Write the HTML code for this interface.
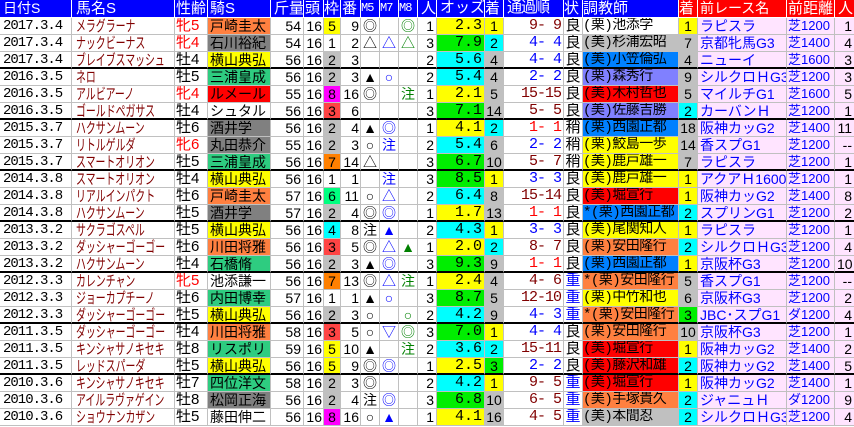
<!DOCTYPE html>
<html><head><meta charset="utf-8">
<style>
*{margin:0;padding:0;box-sizing:border-box}
body{width:854px;height:427px;background:#fff;overflow:hidden;font-family:"Liberation Sans","Noto Sans CJK JP",sans-serif;font-size:14px;color:#000}
.r{display:flex;height:17px;line-height:16px;white-space:nowrap}
.r span{display:block;height:17px;border-right:1px solid #c0c0c0;border-bottom:1px solid #c0c0c0;overflow:hidden;padding:0 2px}
.h{height:18px}
.h span{height:18px;background:#0000ff;color:#fff;border-right:1px solid #fff;border-bottom:1px solid #fff;line-height:17px;text-align:left!important;padding-left:3px;font-size:15px}
.h span.hr{background:#ff0000}
.h span.sm{font-size:12px;padding-left:1px;font-family:"Liberation Mono",monospace;letter-spacing:-1px}
.s span{border-bottom:2px solid #000}
.r span:nth-child(1){width:72px;font-family:"Liberation Mono",monospace;font-size:14px;letter-spacing:-1px;padding-left:3px}
.h span:nth-child(1){font-family:"Liberation Sans","Noto Sans CJK JP",sans-serif;letter-spacing:0}
.r span:nth-child(2){width:103px;color:#800000;padding-left:4px}
.r span:nth-child(2) i{display:inline-block;font-style:normal;font-size:15px;transform:scaleX(.66);transform-origin:0 50%}
.r span:nth-child(3){width:33px;font-size:15px;padding-left:1px}
.r span:nth-child(4){width:63px;padding-left:2px;font-size:14px}
.h span:nth-child(4){font-size:15px}
.r span:nth-child(5){width:33px;text-align:right}
.r span:nth-child(6){width:20px;text-align:right;padding:0 1px}
.r span:nth-child(7){width:17px;text-align:center;padding:0}
.r span:nth-child(8){width:20px;text-align:right;padding:0 1px}
.r span:nth-child(9){width:19px;text-align:center;padding:0}
.r span:nth-child(10){width:19px;text-align:center;padding:0;color:#0000ff}
.r span:nth-child(11){width:19px;text-align:center;padding:0;color:#008000}
.r span:nth-child(12){width:19px;text-align:right}
.r span:nth-child(13){width:48px;text-align:right;font-family:"Liberation Mono",monospace;font-size:15px}
.r span:nth-child(14){width:19px;text-align:center;padding:0}
.r span:nth-child(15){width:60px;text-align:right;font-family:"Liberation Mono",monospace;font-size:15px;letter-spacing:-1px}
.r span:nth-child(16){width:19px;text-align:center;padding:0;font-size:15px}
.r span:nth-child(17){width:96px;padding-left:0;font-family:"Liberation Mono","Noto Sans CJK JP",monospace;font-size:14px;letter-spacing:-0.5px}
.r span:nth-child(18){width:19px;text-align:center;padding:0}
.r span:nth-child(19){width:89px;color:#0000ff;background:#ffe4ff;padding-left:2px;font-size:14px}
.r span:nth-child(20){width:48px;color:#0000ff;background:#ffe4ff;padding-left:1px;font-size:13px;letter-spacing:0}
.r span:nth-child(21){width:19px;text-align:right;background:#ffe4ff;border-right:none}
.h span:nth-child(17),.h span:nth-child(20){font-family:"Liberation Sans","Noto Sans CJK JP",sans-serif;letter-spacing:0;font-size:15px}
.h span:nth-child(19),.h span:nth-child(20),.h span:nth-child(21){background:#ff0000;color:#fff}
.h span:nth-child(2),.h span:nth-child(10),.h span:nth-child(11){color:#fff}
.fm{color:#ff0000}
.y{background:#ffff00!important}.c{background:#00ffff!important}.g{background:#00ee00!important}
.sv{background:#c0c0c0!important}.o{background:#ff8040!important}.rd{background:#ff0000!important}
.b{background:#0080ff!important}.p{background:#8080ff!important}.gy{background:#808080!important}
.m{background:#ff00ff!important}.t{background:#2ecc80!important}.f6{background:#00ff80!important}
.f3{background:#ff4444!important}.f7{background:#ff8000!important}
.dr{color:#800000}.bl{color:#0000ff}.rr{color:#ff0000}
</style></head><body>
<div class="r h"><span>日付S</span><span>馬名S</span><span>性齢</span><span>騎S</span><span>斤量</span><span>頭</span><span>枠</span><span>番</span><span class="sm">M5</span><span class="sm">M7</span><span class="sm">M8</span><span>人</span><span>オッズ</span><span>着</span><span>通過順</span><span>状</span><span>調教師</span><span class="hr">着</span><span>前レース名</span><span>前距離</span><span>人</span></div>

<div class="r"><span>2017.3.4</span><span><i>メラグラーナ</i></span><span class="fm">牝5</span><span class="o">戸崎圭太</span><span>54</span><span>16</span><span class="y">5</span><span>9</span><span>◎</span><span></span><span>◎</span><span>1</span><span class="y">2.3</span><span class="y">1</span><span class="dr">9- 9</span><span>良</span><span> (栗)池添学</span><span class="y">1</span><span>ラピスラ</span><span>芝1200</span><span>1</span></div>
<div class="r"><span>2017.3.4</span><span><i>ナックビーナス</i></span><span class="fm">牝4</span><span class="gy">石川裕紀</span><span>54</span><span>16</span><span>1</span><span>2</span><span>△</span><span>△</span><span>△</span><span>3</span><span class="g">7.9</span><span class="c">2</span><span class="bl">4- 4</span><span>良</span><span class="sv"> (美)杉浦宏昭</span><span class="sv">7</span><span>京都牝馬G3</span><span>芝1400</span><span>4</span></div>
<div class="r s"><span>2017.3.4</span><span><i>ブレイブスマッシュ</i></span><span>牡4</span><span class="y">横山典弘</span><span>56</span><span>16</span><span class="sv">2</span><span>3</span><span></span><span></span><span></span><span>2</span><span class="c">5.6</span><span class="sv">4</span><span class="bl">4- 4</span><span>良</span><span class="b"> (美)小笠倫弘</span><span class="sv">4</span><span>ニューイ</span><span>芝1600</span><span>3</span></div>

<div class="r"><span>2016.3.5</span><span><i>ネロ</i></span><span>牡5</span><span class="t">三浦皇成</span><span>56</span><span>16</span><span class="sv">2</span><span>3</span><span>▲</span><span>○</span><span></span><span>2</span><span class="c">5.4</span><span class="sv">4</span><span class="bl">2- 2</span><span>良</span><span class="p"> (栗)森秀行</span><span class="sv">9</span><span>シルクロＨG3</span><span>芝1200</span><span>3</span></div>
<div class="r"><span>2016.3.5</span><span><i>アルビアーノ</i></span><span class="fm">牝4</span><span class="rd">ルメール</span><span>55</span><span>16</span><span class="m">8</span><span>16</span><span>◎</span><span></span><span>注</span><span>1</span><span class="y">2.1</span><span class="sv">5</span><span class="dr">15-15</span><span>良</span><span class="rd"> (美)木村哲也</span><span class="sv">5</span><span>マイルチG1</span><span>芝1600</span><span>5</span></div>
<div class="r s"><span>2016.3.5</span><span><i>ゴールドペガサス</i></span><span>牡4</span><span>シュタル</span><span>56</span><span>16</span><span class="f3">3</span><span>6</span><span></span><span></span><span></span><span>3</span><span class="g">7.1</span><span class="sv">14</span><span class="dr">5- 5</span><span>良</span><span class="p"> (美)佐藤吉勝</span><span class="c">2</span><span>カーバンＨ</span><span>芝1200</span><span>1</span></div>

<div class="r"><span>2015.3.7</span><span><i>ハクサンムーン</i></span><span>牡6</span><span class="gy">酒井学</span><span>56</span><span>16</span><span class="sv">2</span><span>4</span><span>▲</span><span>◎</span><span></span><span>1</span><span class="y">4.1</span><span class="c">2</span><span class="rr">1- 1</span><span>稍</span><span class="b"> (栗)西園正都</span><span class="sv">18</span><span>阪神カッG2</span><span>芝1400</span><span>11</span></div>
<div class="r"><span>2015.3.7</span><span><i>リトルゲルダ</i></span><span class="fm">牝6</span><span class="gy">丸田恭介</span><span>55</span><span>16</span><span class="sv">2</span><span>3</span><span>○</span><span>注</span><span></span><span>2</span><span class="c">5.4</span><span class="sv">6</span><span class="bl">2- 2</span><span>稍</span><span class="y"> (栗)鮫島一歩</span><span class="sv">14</span><span>香スプG1</span><span>芝1200</span><span>--</span></div>
<div class="r s"><span>2015.3.7</span><span><i>スマートオリオン</i></span><span>牡5</span><span class="t">三浦皇成</span><span>56</span><span>16</span><span class="f7">7</span><span>14</span><span>△</span><span></span><span></span><span>3</span><span class="g">6.7</span><span class="sv">10</span><span class="dr">5- 7</span><span>稍</span><span class="y"> (美)鹿戸雄一</span><span class="sv">7</span><span>ラピスラ</span><span>芝1200</span><span>1</span></div>

<div class="r"><span>2014.3.8</span><span><i>スマートオリオン</i></span><span>牡4</span><span class="y">横山典弘</span><span>56</span><span>16</span><span>1</span><span>1</span><span></span><span>注</span><span></span><span>3</span><span class="g">8.5</span><span class="y">1</span><span class="bl">3- 3</span><span>良</span><span class="y"> (美)鹿戸雄一</span><span class="y">1</span><span>アクアＨ1600</span><span>芝1200</span><span>1</span></div>
<div class="r"><span>2014.3.8</span><span><i>リアルインパクト</i></span><span>牡6</span><span class="o">戸崎圭太</span><span>57</span><span>16</span><span class="f6">6</span><span>11</span><span>○</span><span>△</span><span></span><span>2</span><span class="c">6.4</span><span class="sv">8</span><span class="dr">15-14</span><span>良</span><span class="rd"> (美)堀宣行</span><span class="y">1</span><span>阪神カッG2</span><span>芝1400</span><span>8</span></div>
<div class="r s"><span>2014.3.8</span><span><i>ハクサンムーン</i></span><span>牡5</span><span class="gy">酒井学</span><span>57</span><span>16</span><span class="sv">2</span><span>4</span><span>◎</span><span>◎</span><span></span><span>1</span><span class="y">1.7</span><span class="sv">13</span><span class="rr">1- 1</span><span>良</span><span class="b">*(栗)西園正都</span><span class="c">2</span><span>スプリンG1</span><span>芝1200</span><span>2</span></div>

<div class="r"><span>2013.3.2</span><span><i>サクラゴスペル</i></span><span>牡5</span><span class="y">横山典弘</span><span>56</span><span>16</span><span class="c">4</span><span>8</span><span>注</span><span>▲</span><span></span><span>2</span><span class="c">4.3</span><span class="y">1</span><span class="bl">3- 3</span><span>良</span><span class="y"> (美)尾関知人</span><span class="y">1</span><span>ラピスラ</span><span>芝1200</span><span>1</span></div>
<div class="r"><span>2013.3.2</span><span><i>ダッシャーゴーゴー</i></span><span>牡6</span><span class="o">川田将雅</span><span>56</span><span>16</span><span class="f3">3</span><span>5</span><span>◎</span><span>△</span><span>▲</span><span>1</span><span class="y">2.0</span><span class="c">2</span><span class="dr">8- 7</span><span>良</span><span class="o"> (栗)安田隆行</span><span class="c">2</span><span>シルクロＨG3</span><span>芝1200</span><span>4</span></div>
<div class="r s"><span>2013.3.2</span><span><i>ハクサンムーン</i></span><span>牡4</span><span class="t">石橋脩</span><span>56</span><span>16</span><span class="sv">2</span><span>3</span><span>▲</span><span>◎</span><span></span><span>3</span><span class="g">9.3</span><span class="sv">9</span><span class="rr">1- 1</span><span>良</span><span class="b"> (栗)西園正都</span><span class="y">1</span><span>京阪杯G3</span><span>芝1200</span><span>10</span></div>

<div class="r"><span>2012.3.3</span><span><i>カレンチャン</i></span><span class="fm">牝5</span><span>池添謙一</span><span>56</span><span>16</span><span class="f7">7</span><span>13</span><span>◎</span><span>△</span><span>注</span><span>1</span><span class="y">2.4</span><span class="sv">4</span><span class="dr">4- 6</span><span class="bl">重</span><span class="o">*(栗)安田隆行</span><span class="sv">5</span><span>香スプG1</span><span>芝1200</span><span>--</span></div>
<div class="r"><span>2012.3.3</span><span><i>ジョーカプチーノ</i></span><span>牡6</span><span class="t">内田博幸</span><span>57</span><span>16</span><span>1</span><span>1</span><span>▲</span><span>○</span><span></span><span>3</span><span class="g">8.7</span><span class="sv">5</span><span class="dr">12-10</span><span class="bl">重</span><span class="y"> (栗)中竹和也</span><span class="sv">6</span><span>京阪杯G3</span><span>芝1200</span><span>2</span></div>
<div class="r s"><span>2012.3.3</span><span><i>ダッシャーゴーゴー</i></span><span>牡5</span><span class="y">横山典弘</span><span>56</span><span>16</span><span class="sv">2</span><span>3</span><span>○</span><span></span><span>○</span><span>2</span><span class="c">4.2</span><span class="sv">9</span><span class="bl">4- 3</span><span class="bl">重</span><span class="o">*(栗)安田隆行</span><span class="g">3</span><span>JBC･スプG1</span><span>ダ1200</span><span>4</span></div>

<div class="r"><span>2011.3.5</span><span><i>ダッシャーゴーゴー</i></span><span>牡4</span><span class="o">川田将雅</span><span>58</span><span>16</span><span class="f3">3</span><span>5</span><span>○</span><span>▽</span><span>◎</span><span>3</span><span class="g">7.0</span><span class="y">1</span><span class="bl">4- 4</span><span>良</span><span class="o"> (栗)安田隆行</span><span class="sv">10</span><span>京阪杯G3</span><span>芝1200</span><span>1</span></div>
<div class="r"><span>2011.3.5</span><span><i>キンシャサノキセキ</i></span><span>牡8</span><span class="t">リスポリ</span><span>59</span><span>16</span><span class="y">5</span><span>10</span><span>▲</span><span></span><span>注</span><span>2</span><span class="c">3.6</span><span class="c">2</span><span class="dr">15-11</span><span>良</span><span class="rd"> (美)堀宣行</span><span class="y">1</span><span>阪神カッG2</span><span>芝1400</span><span>2</span></div>
<div class="r s"><span>2011.3.5</span><span><i>レッドスパーダ</i></span><span>牡5</span><span class="y">横山典弘</span><span>56</span><span>16</span><span class="y">5</span><span>9</span><span>◎</span><span>◎</span><span></span><span>1</span><span class="y">2.5</span><span class="g">3</span><span class="bl">2- 2</span><span>良</span><span class="rd"> (美)藤沢和雄</span><span class="c">2</span><span>阪神カッG2</span><span>芝1400</span><span>5</span></div>

<div class="r"><span>2010.3.6</span><span><i>キンシャサノキセキ</i></span><span>牡7</span><span class="t">四位洋文</span><span>58</span><span>16</span><span class="sv">2</span><span>3</span><span>◎</span><span></span><span></span><span>2</span><span class="c">4.2</span><span class="y">1</span><span class="dr">9- 5</span><span class="bl">重</span><span class="rd"> (美)堀宣行</span><span class="y">1</span><span>阪神カッG2</span><span>芝1400</span><span>1</span></div>
<div class="r"><span>2010.3.6</span><span><i>アイルラヴァゲイン</i></span><span>牡8</span><span class="gy">松岡正海</span><span>56</span><span>16</span><span class="sv">2</span><span>4</span><span>注</span><span>◎</span><span></span><span>3</span><span class="g">6.8</span><span class="sv">10</span><span class="dr">6- 5</span><span class="bl">重</span><span class="o"> (美)手塚貴久</span><span class="c">2</span><span>ジャニュＨ</span><span>ダ1200</span><span>9</span></div>
<div class="r"><span>2010.3.6</span><span><i>ショウナンカザン</i></span><span>牡5</span><span>藤田伸二</span><span>56</span><span>16</span><span class="m">8</span><span>16</span><span>○</span><span>▲</span><span></span><span>1</span><span class="y">4.1</span><span class="sv">16</span><span class="dr">4- 5</span><span class="bl">重</span><span class="sv"> (美)本間忍</span><span class="c">2</span><span>シルクロＨG3</span><span>芝1200</span><span>4</span></div>
</body></html>
